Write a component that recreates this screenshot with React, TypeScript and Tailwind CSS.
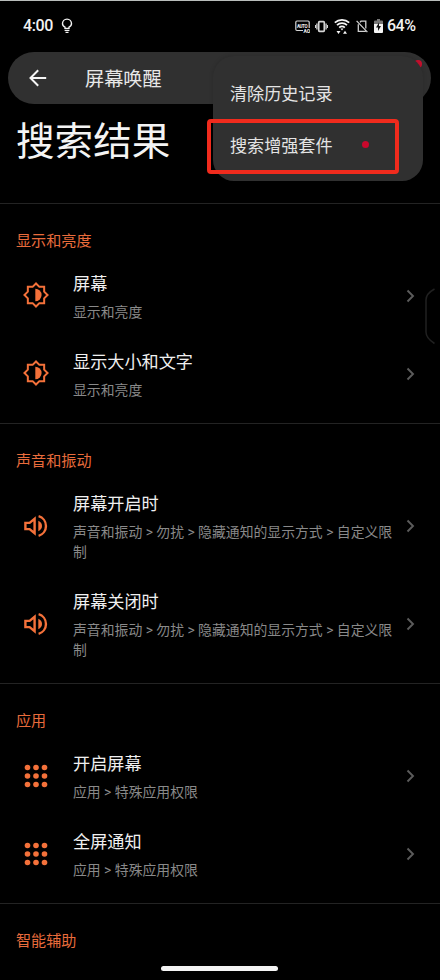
import React from "react";

type IconKind = "brightness" | "volume" | "apps";
type Item = { title: string; path: string };
type Section = { heading: string; icon: IconKind; items: Item[] };

const sections: Section[] = [
  {
    heading: "显示和亮度",
    icon: "brightness",
    items: [
      { title: "屏幕", path: "显示和亮度" },
      { title: "显示大小和文字", path: "显示和亮度" },
    ],
  },
  {
    heading: "声音和振动",
    icon: "volume",
    items: [
      { title: "屏幕开启时", path: "声音和振动 > 勿扰 > 隐藏通知的显示方式 > 自定义限制" },
      { title: "屏幕关闭时", path: "声音和振动 > 勿扰 > 隐藏通知的显示方式 > 自定义限制" },
    ],
  },
  {
    heading: "应用",
    icon: "apps",
    items: [
      { title: "开启屏幕", path: "应用 > 特殊应用权限" },
      { title: "全屏通知", path: "应用 > 特殊应用权限" },
    ],
  },
  { heading: "智能辅助", icon: "apps", items: [] },
];

function ItemIcon({ kind }: { kind: IconKind }) {
  if (kind === "brightness") {
    return (
      <svg className="mb-[2px]" width="28" height="28" viewBox="0 0 24 24" fill="none">
        <path
          d="M19 9.1V5h-4.1L12 2.1 9.1 5H5v4.1L2.1 12 5 14.9V19h4.1L12 21.9 14.9 19H19v-4.1L21.9 12z"
          stroke="#f4713a"
          strokeWidth="1.7"
        />
        <path d="M11.4 6.6a5.4 5.4 0 0 1 0 10.8z" fill="#f4713a" />
      </svg>
    );
  }
  if (kind === "volume") {
    return (
      <svg width="24" height="24" viewBox="0 0 24 24" fill="none" stroke="#f4713a" strokeWidth="2.4">
        <path d="M1.400 8.900h4.200L10.600 4.800v14.400L5.600 15.100H1.400z" />
        <path d="M14.600 2.200a10.200 10.200 0 0 1 0 19.600" />
        <path d="M14.300 6.800c2.300 1 3.700 2.900 3.700 5.200s-1.400 4.200-3.700 5.200z" fill="#f4713a" stroke="none" />
      </svg>
    );
  }
  return (
    <svg width="24" height="24" viewBox="0 0 24 24" fill="#f4713a">
      {[3.5, 12, 20.5].map((y) =>
        [3.5, 12, 20.5].map((x) => <circle key={`${x}-${y}`} cx={x} cy={y} r="2.8" />),
      )}
    </svg>
  );
}

function StatusBar() {
  return (
    <div className="flex h-[51px] items-center pb-px pl-[23px] pr-6 text-[#f2f2f2]">
      <span className="w-[31px] text-[16px] font-medium leading-5 tracking-[-0.4px]">4:00</span>
      <svg className="ml-[7px]" width="12" height="16" viewBox="0 0 12 16" fill="none" stroke="currentColor" strokeWidth="1.4">
        <path d="M4 10.4V9.2C2.4 8.5 1.5 7.2 1.5 5.6a4.5 4.5 0 0 1 9 0c0 1.600-.9 2.900-2.500 3.600v1.200z" />
        <path d="M3.600 12.300h4.800M4.500 14.300h3" strokeWidth="1.200" />
      </svg>
      <div className="ml-auto flex items-center">
        <svg width="15" height="13" viewBox="0 0 15 13" fill="none" stroke="#d5d5d5">
          <path d="M8 10.500H2A1.200 1.200 0 0 1 .8 9.300V2.200A1.200 1.200 0 0 1 2 1h11a1.200 1.200 0 0 1 1.200 1.200V8" strokeWidth="1.200" />
          <text x="2" y="7.500" fontSize="4.500" fontWeight="700" textLength="10.500" fill="#f2f2f2" stroke="none">AUTO</text>
          <text x="8.500" y="12.500" fontSize="5" fontWeight="700" fill="#f2f2f2" stroke="none">AQ</text>
        </svg>
        <svg className="ml-[5px]" width="13" height="13" viewBox="0 0 13 13" fill="none" stroke="#d5d5d5">
          <rect x="3.700" y="1.700" width="5.600" height="9.600" rx=".8" strokeWidth="1.700" />
          <path d="M1.900 3.500v6M11.100 3.500v6" strokeWidth="1.300" />
          <path d="M.5 5v3M12.500 5v3" />
        </svg>
        <svg className="ml-[6px]" width="16" height="17" viewBox="0 0 16 17" fill="none" stroke="#f5f5f5" strokeWidth="1.700">
          <path d="M.8 4.700a10.500 10.500 0 0 1 14.400 0M3 7.200a7.200 7.200 0 0 1 10 0M5.200 9.600a4 4 0 0 1 5.600 0" />
          <path d="M6.500 10.500h3L8 12.500zM2.500 13h4l-2 3zM9 15.800h4l-2-3z" fill="#f5f5f5" stroke="none" />
        </svg>
        <svg className="ml-[6px]" width="12" height="13" viewBox="0 0 12 13" fill="none" stroke="#d0d0d0" strokeWidth="1.300">
          <path d="M4 2.300 5 1.200h4.800v7.300M2.300 4.200v7.200h7.500M.6.9l10.800 11.200" />
        </svg>
        <svg className="ml-[6px]" width="9" height="14" viewBox="0 0 9 14">
          <path d="M3 0h3v1.500h2A1 1 0 0 1 9 2.500V5H0V2.500a1 1 0 0 1 1-1h2z" fill="#777" />
          <path d="M0 5h9v8a1 1 0 0 1-1 1H1a1 1 0 0 1-1-1z" fill="#f5f5f5" />
          <path d="M5 3.500 2 8.500h2v3.500l3-5H5z" fill="#111" />
        </svg>
        <span className="ml-[4px] w-[29px] whitespace-nowrap text-[16px] font-medium leading-5 tracking-[-0.5px]">64%</span>
      </div>
    </div>
  );
}

function ResultRow({ item, icon }: { item: Item; icon: IconKind }) {
  return (
    <div className="flex items-center pl-4 pr-[25px]">
      <div className="flex w-[39px] shrink-0 justify-center">
        <ItemIcon kind={icon} />
      </div>
      <div className="ml-[18px] w-[326px] shrink-0 pb-[13px] pt-[14px]">
        <div className="text-[17.150px] leading-[26px] text-[#f0f0f0]">{item.title}</div>
        <div className="mt-[5px] break-all text-[13.850px] leading-5 text-[#898989]">{item.path}</div>
      </div>
      <svg className="ml-[7px] shrink-0" width="9" height="14" viewBox="0 0 9 14" fill="none" stroke="#5c5c5c" strokeWidth="1.900">
        <path d="M1.500 1.500 7 7l-5.500 5.500" />
      </svg>
    </div>
  );
}

export default function App() {
  return (
    <div className="relative h-[980px] w-[440px] overflow-hidden border-t border-[#b9bdbb] bg-black font-[Roboto,'Noto_Sans_CJK_SC',sans-serif]" lang="zh-CN">
      <StatusBar />

      <div className="relative ml-2 flex h-[52px] w-[423px] items-center rounded-full bg-[#303030] pl-[21px]">
        <svg width="18" height="18" viewBox="0 0 18 18" fill="none" stroke="#f5f5f5" strokeWidth="2">
          <path d="M17.200 9H1.800M9.200 1.300 1.500 9l7.700 7.700" />
        </svg>
        <span className="ml-[38px] pt-1 text-[19.200px] leading-7 text-[#e8e8e8]">屏幕唤醒</span>
        <span className="absolute left-[406px] top-[8px] size-[8px] rounded-full bg-[#c80f2e]" />
      </div>

      <h1 className="h-[99px] pl-4 pt-[11px] text-[38.600px] font-normal leading-[54px] text-[#f4f4f4]">搜索结果</h1>

      {sections.map((section) => (
        <section key={section.heading} className="border-t border-[#232323] pb-[10px]">
          <h2 className="h-[53px] pl-4 pt-[26px] text-[15.100px] leading-[22px] text-[#e96c3c]">{section.heading}</h2>
          {section.items.map((item) => (
            <ResultRow key={item.title} item={item} icon={section.icon} />
          ))}
        </section>
      ))}

      <div className="absolute left-[213px] top-[55px] h-[125px] w-[210px] rounded-[21px] bg-[#303030] pl-[17px] pt-[13px] text-[17.100px] text-[#e4e4e4] shadow-[0_0_4px_rgba(0,0,0,0.16)]">
        <div className="flex h-[51px] items-center">清除历史记录</div>
        <div className="flex h-[53px] items-center">
          搜索增强套件
          <span className="mb-[4px] ml-[29px] size-[7px] rounded-full bg-[#c9082c]" />
        </div>
      </div>
      <div className="absolute left-[207px] top-[118px] h-[55px] w-[192px] rounded-[4px] border-4 border-[#f02b1d]" />

      <svg className="absolute left-[424px] top-[286px]" width="16" height="60" viewBox="0 0 16 60" fill="none" stroke="#202020" strokeWidth="1.500">
        <path d="M10.500 2C5 5 2 8 2 13v32c0 5 3 8 8.500 11.500" />
      </svg>
      <div className="absolute left-[161px] top-[965px] h-[5px] w-[117px] rounded-full bg-[#f4f4f4]" />
    </div>
  );
}
